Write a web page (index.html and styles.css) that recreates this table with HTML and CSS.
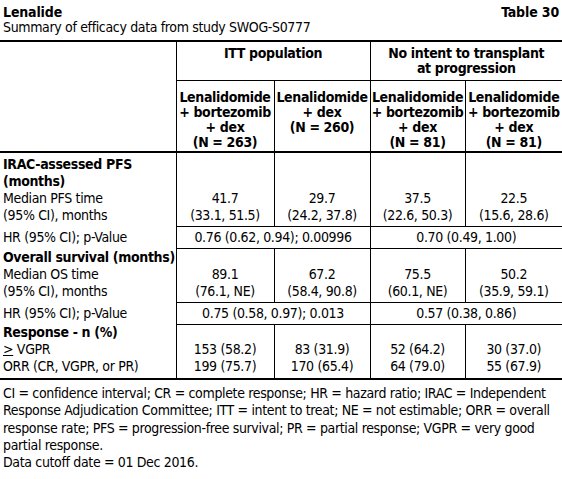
FILE: index.html
```html
<!DOCTYPE html>
<html lang="en">
<head>
	<meta charset="UTF-8">
	<title>Lenalide - Table 30</title>
	<link rel="stylesheet" href="styles.css">
</head>
<body>

<div class="sheet">
	<div class="caption">
		<div class="caption-top"><span>Lenalide</span><span>Table 30</span></div>
		<div>Summary of efficacy data from study SWOG-S0777</div>
	</div>

	<table class="efficacy">
		<colgroup>
			<col class="c-label">
			<col class="c-arm1">
			<col class="c-arm2">
			<col class="c-arm3">
			<col class="c-arm4">
		</colgroup>
		<thead>
			<tr class="group-row">
				<th rowspan="2" class="blank"></th>
				<th colspan="2">ITT population</th>
				<th colspan="2">No intent to transplant<br>at progression</th>
			</tr>
			<tr class="arm-row">
				<th>Lenalidomide<br>+ bortezomib<br>+ dex<br>(N = 263)</th>
				<th>Lenalidomide<br>+ dex<br>(N = 260)</th>
				<th>Lenalidomide<br>+ bortezomib<br>+ dex<br>(N = 81)</th>
				<th>Lenalidomide<br>+ bortezomib<br>+ dex<br>(N = 81)</th>
			</tr>
		</thead>
		<tbody>
			<tr class="block pfs">
				<td class="label"><b>IRAC-assessed PFS<br>(months)</b><br>Median PFS time<br>(95% CI), months</td>
				<td>41.7<br>(33.1, 51.5)</td>
				<td>29.7<br>(24.2, 37.8)</td>
				<td>37.5<br>(22.6, 50.3)</td>
				<td>22.5<br>(15.6, 28.6)</td>
			</tr>
			<tr class="hr-row">
				<td class="label">HR (95% CI); p-Value</td>
				<td colspan="2">0.76 (0.62, 0.94); 0.00996</td>
				<td colspan="2">0.70 (0.49, 1.00)</td>
			</tr>
			<tr class="block os">
				<td class="label"><b>Overall survival (months)</b><br>Median OS time<br>(95% CI), months</td>
				<td>89.1<br>(76.1, NE)</td>
				<td>67.2<br>(58.4, 90.8)</td>
				<td>75.5<br>(60.1, NE)</td>
				<td>50.2<br>(35.9, 59.1)</td>
			</tr>
			<tr class="hr-row">
				<td class="label">HR (95% CI); p-Value</td>
				<td colspan="2">0.75 (0.58, 0.97); 0.013</td>
				<td colspan="2">0.57 (0.38, 0.86)</td>
			</tr>
			<tr class="block resp">
				<td class="label"><b>Response - n (%)</b><br><span class="ge">&gt;</span> VGPR<br>ORR (CR, VGPR, or PR)</td>
				<td>153 (58.2)<br>199 (75.7)</td>
				<td>83 (31.9)<br>170 (65.4)</td>
				<td>52 (64.2)<br>64 (79.0)</td>
				<td>30 (37.0)<br>55 (67.9)</td>
			</tr>
		</tbody>
	</table>

	<p class="notes">CI = confidence interval; CR = complete response; HR = hazard ratio; IRAC = Independent Response Adjudication Committee; ITT = intent to treat; NE = not estimable; ORR = overall response rate; PFS = progression-free survival; PR = partial response; VGPR = very good partial response.<br>Data cutoff date = 01 Dec 2016.</p>
</div>

</body>
</html>
```

FILE: styles.css
```css
body {
	margin: 0;
	background: #fff;
	color: #000;
	font-family: "DejaVu Sans Condensed", "Liberation Sans", sans-serif;
	font-size: 14px;
	letter-spacing: -0.35px;
}
.sheet {
	width: 562px;
}

/* title block */
.caption {
	padding: 5px 3px 0;
	line-height: 15px;
}
.caption-top {
	display: flex;
	justify-content: space-between;
	font-weight: bold;
	letter-spacing: -0.15px;
}

/* the table */
.efficacy {
	width: 100%;
	margin-top: 5px;
	border-collapse: collapse;
	table-layout: fixed;
	border-top: 2px solid #000;
	border-bottom: 2px solid #000;
}
.c-label { width: 176px; }
.c-arm1 { width: 98px; }
.c-arm2 { width: 96px; }
.c-arm3 { width: 95px; }
.c-arm4 { width: 97px; }

.efficacy th {
	font-weight: bold;
	line-height: 15px;
	text-align: center;
	vertical-align: top;
	padding: 0 1px;
	border-left: 1px solid #000;
}
.efficacy th.blank {
	border-left: 0;
	border-bottom: 2px solid #000;
}
.group-row {
	height: 39px;
}
.group-row th {
	padding-top: 4px;
	border-bottom: 1px solid #000;
}
.arm-row {
	height: 72px;
}
.arm-row th {
	padding-top: 9px;
	border-bottom: 2px solid #000;
}

.efficacy td {
	line-height: 17px;
	text-align: center;
	vertical-align: bottom;
	padding: 0 3px 2px;
	border-left: 1px solid #000;
}
.efficacy td.label {
	text-align: left;
	white-space: nowrap;
	padding-right: 0;
	border-left: 0;
}
.pfs { height: 74px; }
.os { height: 54px; }
.resp { height: 55px; }
.resp td { padding-bottom: 3px; }

.hr-row td {
	padding: 2px 3px;
	border-top: 1px solid #000;
	border-bottom: 1px solid #000;
}
.hr-row td.label {
	border-top: 0;
	border-bottom: 0;
}
.ge {
	text-decoration: underline;
}

/* footnotes */
.notes {
	margin: 5px 0 0;
	padding: 0 3px;
	line-height: 17.3px;
}
```
